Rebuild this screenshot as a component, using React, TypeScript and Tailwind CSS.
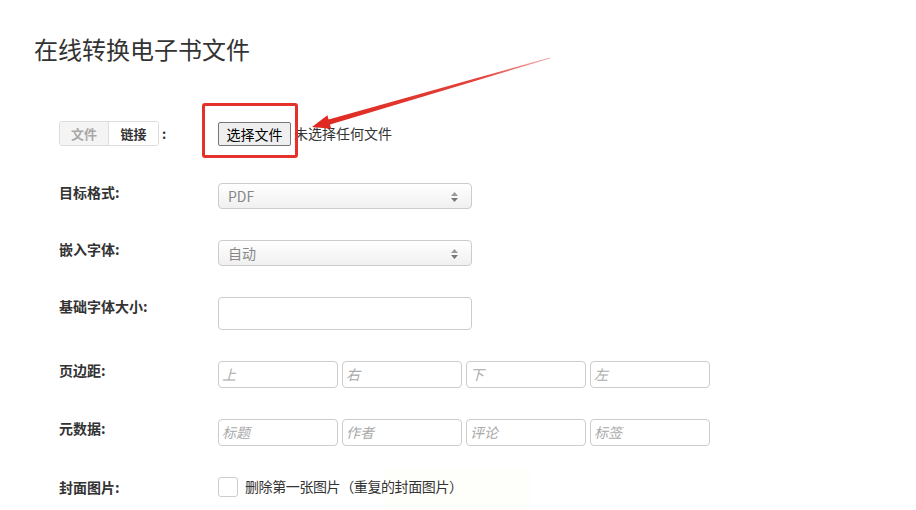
import React from "react";

const font = { fontFamily: '"Noto Sans CJK SC", "Noto Sans", sans-serif' };

const Label = ({ children }: { children: React.ReactNode }) => (
  <div className="w-[159px] shrink-0 text-[14px] font-bold leading-[18px] text-[#333]">{children}</div>
);

const SelectBox = ({ value }: { value: string }) => (
  <div className="relative flex h-[26px] w-[254px] items-center rounded-[4px] border border-[#ccc] bg-gradient-to-b from-white to-[#f0f0f0] pl-[9px] text-[14px] text-[#888]">
    {value}
    <svg className="absolute right-[13px] top-[8px]" width="7" height="10" viewBox="0 0 7 10">
      <path d="M3.5 0 L7 4 H0 Z" fill="#999" />
      <path d="M3.5 10 L7 6 H0 Z" fill="#777" />
    </svg>
  </div>
);

const SmallInput = ({ placeholder }: { placeholder: string }) => (
  <div className="flex h-[27px] w-[120px] items-center rounded-[4px] border border-[#ccc] bg-white pl-[3px] text-[14px] italic text-[#aaa]">
    {placeholder}
  </div>
);

export default function App() {
  return (
    <div className="relative h-[510px] w-[916px] overflow-hidden bg-white" style={font}>
      {/* faint watermark tint, behind the form */}
      <div className="absolute left-[385px] top-[468px] h-[42px] w-[145px] bg-[#fefefb]" />

      <div className="relative">
        <h1 className="pl-[34px] pt-[32px] text-[24px] font-normal leading-[34px] text-[#333]">在线转换电子书文件</h1>

        <div className="flex flex-col gap-[31px] pl-[59px] pt-[55px]">
          {/* 文件 / 链接 */}
          <div className="mb-[6px] flex items-center">
            <div className="flex w-[159px] shrink-0 items-center">
              <div className="flex h-[25px] overflow-hidden rounded-[3px] border border-[#ddd] text-[13px] font-bold">
                <span className="flex w-[48px] items-center justify-center bg-[#f4f4f4] text-[#a9a9a9]">文件</span>
                <span className="flex w-[50px] items-center justify-center border-l border-[#ddd] bg-white text-[#333]">链接</span>
              </div>
              <span className="ml-[3px] text-[13px] font-bold text-[#333]">:</span>
            </div>
            <div className="flex items-center">
              <button className="h-[24px] w-[73px] rounded-[2px] border border-[#767676] bg-[#efefef] text-[14px] leading-[22px] text-black">
                选择文件
              </button>
              <span className="ml-[3px] text-[14px] text-[#333]">未选择任何文件</span>
            </div>
          </div>

          <div className="flex items-start">
            <Label>目标格式:</Label>
            <SelectBox value="PDF" />
          </div>

          <div className="flex items-start">
            <Label>嵌入字体:</Label>
            <SelectBox value="自动" />
          </div>

          <div className="flex items-start">
            <Label>基础字体大小:</Label>
            <div className="h-[33px] w-[254px] rounded-[4px] border border-[#ccc] bg-white" />
          </div>

          <div className="flex items-start">
            <Label>页边距:</Label>
            <div className="flex gap-[4px]">
              <SmallInput placeholder="上" />
              <SmallInput placeholder="右" />
              <SmallInput placeholder="下" />
              <SmallInput placeholder="左" />
            </div>
          </div>

          <div className="flex items-start">
            <Label>元数据:</Label>
            <div className="flex gap-[4px]">
              <SmallInput placeholder="标题" />
              <SmallInput placeholder="作者" />
              <SmallInput placeholder="评论" />
              <SmallInput placeholder="标签" />
            </div>
          </div>

          <div className="-mt-[1px] flex items-center">
            <Label>封面图片:</Label>
            <div className="flex items-center">
              <div className="h-[20px] w-[20px] rounded-[3px] border border-[#ccc] bg-white" />
              <span className="ml-[7px] text-[14px] tracking-[-0.4px] text-[#333]">删除第一张图片（重复的封面图片）</span>
            </div>
          </div>
        </div>
      </div>

      {/* annotation: red box */}
      <div className="absolute left-[202px] top-[103px] h-[55px] w-[96px] rounded-[3px] border-[3px] border-[#e3322b]" />

      {/* annotation: arrow */}
      <svg className="absolute left-0 top-0" width="916" height="510" viewBox="0 0 916 510">
        <defs>
          <linearGradient id="arr" x1="312" y1="127" x2="550" y2="58" gradientUnits="userSpaceOnUse">
            <stop offset="0" stopColor="#e0281f" />
            <stop offset="0.7" stopColor="#e2413a" />
            <stop offset="1" stopColor="#f3b0ad" />
          </linearGradient>
        </defs>
        <polygon
          points="312,127 331.2,128.7 330,124.4 550.1,58.4 549.9,57.6 328.6,119.6 327.4,115.3"
          fill="url(#arr)"
        />
      </svg>
    </div>
  );
}
